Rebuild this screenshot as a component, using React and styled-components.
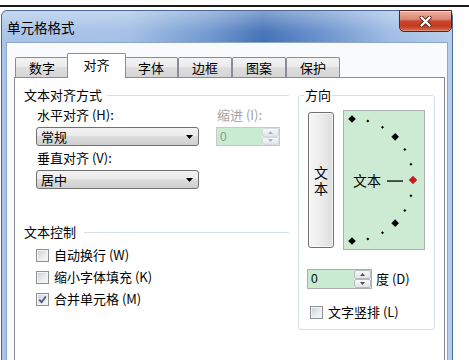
import React from "react";
import styled, { createGlobalStyle } from "styled-components";

const GlobalStyle = createGlobalStyle`
  html, body { margin: 0; padding: 0; background: #ffffff; }
  body {
    font-family: "Noto Sans CJK SC", "Noto Sans", sans-serif;
    font-size: 13px;
    color: #000;
  }
  * { box-sizing: border-box; }
`;

const Page = styled.div`
  width: 469px;
  height: 360px;
  overflow: hidden;
  padding-top: 5px;
  background: #fff;
`;

const TopRule = styled.div`
  height: 2px;
  background: #1a1a1a;
`;

const Window = styled.div`
  margin: 3px 0 0 1px;
  width: 452px;
  height: 400px;
  display: flex;
  flex-direction: column;
  border: 1px solid #4a6a94;
  border-radius: 6px 6px 0 0;
  background:
    linear-gradient(180deg, rgba(255,255,255,0.35) 0px, rgba(255,255,255,0.05) 20px, rgba(255,255,255,0) 31px),
    linear-gradient(90deg, #a9c4e8 0%, #a2bfe6 28%, #6f97cf 46%, #4170b6 58%, #6891cc 71%, #9dbbe4 86%, #b6ceec 100%);
`;

const TitleBar = styled.div`
  height: 31px;
  display: flex;
  justify-content: space-between;
  align-items: flex-start;
  padding-left: 5px;
`;

const Title = styled.div`
  margin-top: 7px;
  line-height: 18px;
  font-size: 13.5px;
  color: #000;
`;

const CloseButton = styled.div`
  width: 53px;
  height: 22px;
  margin-top: -1px;
  display: flex;
  align-items: center;
  justify-content: center;
  border: 1px solid #5b2118;
  border-radius: 0 0 5px 5px;
  background: linear-gradient(180deg, #eab1a2 0%, #dc8a75 40%, #c8452a 52%, #c23b20 75%, #d96b4f 100%);
  box-shadow: inset 0 1px 0 rgba(255,255,255,0.45), inset 0 -1px 1px rgba(255,255,255,0.25);
`;

const Client = styled.div`
  flex: 1;
  margin: 0 4px;
  border: 1px solid #8fa7c6;
  background: #f9fafb;
  padding: 10px 2px 0 7px;
  display: flex;
  flex-direction: column;
`;

const TabRow = styled.div`
  display: flex;
  align-items: flex-end;
  height: 24px;
  padding-left: 1px;
  position: relative;
  z-index: 1;
`;

const Tab = styled.div`
  width: ${(p) => (p.$active ? 59 : 54)}px;
  height: ${(p) => (p.$active ? 25 : 20)}px;
  margin: 0 ${(p) => (p.$active ? -2 : 0)}px ${(p) => (p.$active ? -1 : 0)}px;
  border: 1px solid #898c95;
  border-bottom: none;
  border-radius: 2px 2px 0 0;
  background: ${(p) =>
    p.$active
      ? "#ffffff"
      : "linear-gradient(180deg, #f3f3f3 0%, #ebebeb 45%, #dedede 50%, #d5d5d5 100%)"};
  display: flex;
  align-items: center;
  justify-content: center;
  position: relative;
  z-index: ${(p) => (p.$active ? 2 : 1)};
  font-size: 13px;
  line-height: 16px;
  padding-bottom: ${(p) => (p.$active ? 2 : 0)}px;
`;

const Panel = styled.div`
  flex: 1;
  border: 1px solid #898c95;
  background: #ffffff;
  display: flex;
  align-items: flex-start;
  padding-right: 9px;
`;

const LeftCol = styled.div`
  width: 274px;
  padding: 8px 0 0 9px;
  display: flex;
  flex-direction: column;
`;

const SectionHeader = styled.div`
  display: flex;
  align-items: center;
  height: 18px;
  margin-top: ${(p) => p.$mt || 0}px;
`;

const SectionLabel = styled.span`
  line-height: 18px;
  white-space: nowrap;
`;

const SectionLine = styled.span`
  flex: 1;
  height: 1px;
  margin-left: ${(p) => p.$gap}px;
  background: #d9dfe6;
`;

const FieldGrid = styled.div`
  display: grid;
  grid-template-columns: 163px 64px;
  column-gap: 17px;
  row-gap: 3px;
  margin: 2px 0 0 12px;
`;

const Field = styled.div`
  display: flex;
  flex-direction: column;
  gap: 3px;
`;

const FieldLabel = styled.span`
  line-height: 18px;
  padding-left: 1px;
  white-space: nowrap;
  color: ${(p) => (p.$disabled ? "#a3a3a3" : "#000")};
`;

const Combo = styled.div`
  width: 163px;
  height: 19px;
  border: 1px solid #707070;
  border-radius: 3px;
  background: linear-gradient(180deg, #f2f2f2 0%, #ebebeb 45%, #dddddd 50%, #cfcfcf 100%);
  display: flex;
  align-items: center;
  justify-content: space-between;
  padding: 0 5px 0 4px;
  line-height: 17px;
`;

const SpinBox = styled.div`
  display: flex;
  width: ${(p) => p.$w}px;
  height: ${(p) => p.$h}px;
  border: 1px solid ${(p) => (p.$disabled ? "#c5cad0" : "#abadb3")};
  background: #c9ebd0;
`;

const SpinValue = styled.div`
  flex: 1;
  padding-left: 3px;
  display: flex;
  align-items: center;
  font-family: "Liberation Sans", Arial, sans-serif;
  font-size: 12px;
  color: ${(p) => (p.$disabled ? "#8d978f" : "#000")};
`;

const SpinButtons = styled.div`
  width: 17px;
  display: flex;
  flex-direction: column;
  background: #f3f4f6;
`;

const SpinButton = styled.div`
  flex: 1;
  display: flex;
  align-items: center;
  justify-content: center;
  border: 1px solid ${(p) => (p.$disabled ? "#d7dade" : "#b6bac1")};
  border-radius: 2px;
  background: linear-gradient(180deg, #f7f8fa, #e1e4e9);
`;

const CheckList = styled.div`
  display: flex;
  flex-direction: column;
  margin: 3px 0 0 12px;
`;

const CheckRow = styled.label`
  display: flex;
  align-items: center;
  gap: 5px;
  height: 22px;
  margin: ${(p) => p.$m || "0"};
  line-height: 18px;
  white-space: nowrap;
`;

const CheckBox = styled.span`
  width: 13px;
  height: 13px;
  flex: none;
  border: 1px solid #8e8f8f;
  background: linear-gradient(135deg, #c9cdd3 0%, #e9ebee 55%, #f8f8f8 100%);
  box-shadow: inset 0 0 0 1px #f4f4f4;
  display: flex;
  align-items: center;
  justify-content: center;
`;

const Group = styled.fieldset`
  margin: 8px 0 0 9px;
  width: 137px;
  min-width: 0;
  border: 1px solid #d5dde5;
  border-radius: 3px;
  padding: 6px 8px 6px 9px;
`;

const Legend = styled.legend`
  margin-left: -4px;
  padding: 0 1px;
  line-height: 18px;
  font-size: 13px;
`;

const GroupBody = styled.div`
  display: flex;
  flex-direction: column;
`;

const DialRow = styled.div`
  display: flex;
  align-items: center;
  gap: 9px;
`;

const VerticalButton = styled.div`
  width: 26px;
  height: 136px;
  border: 1px solid #707070;
  border-radius: 3px;
  background: linear-gradient(90deg, #f6f6f6 0%, #ececec 50%, #dedede 100%);
  box-shadow: inset 0 0 0 1px rgba(255,255,255,0.7);
  display: flex;
  align-items: center;
  justify-content: center;
`;

const VerticalText = styled.span`
  width: 14px;
  font-size: 14px;
  line-height: 16px;
  text-align: center;
  word-break: break-all;
`;

const DialBox = styled.div`
  width: 82px;
  height: 140px;
  border: 1px solid #a9b1aa;
  background: #cdebd2;
  display: flex;
`;

const AngleRow = styled.div`
  display: flex;
  align-items: center;
  gap: 4px;
  margin: 19px 0 0 -1px;
  line-height: 18px;
`;

function Arrow({ up, color }) {
  return (
    <svg width="5" height="3" viewBox="0 0 5 3">
      <polygon points={up ? "0,3 5,3 2.5,0" : "0,0 5,0 2.5,3"} fill={color} />
    </svg>
  );
}

function Spin({ w, h, value, disabled }) {
  const c = disabled ? "#b0b4b8" : "#505050";
  return (
    <SpinBox $w={w} $h={h} $disabled={disabled}>
      <SpinValue $disabled={disabled}>{value}</SpinValue>
      <SpinButtons>
        <SpinButton $disabled={disabled}><Arrow up color={c} /></SpinButton>
        <SpinButton $disabled={disabled}><Arrow color={c} /></SpinButton>
      </SpinButtons>
    </SpinBox>
  );
}

function DropArrow() {
  return (
    <svg width="7" height="4" viewBox="0 0 7 4">
      <polygon points="0,0 7,0 3.5,4" fill="#000" />
    </svg>
  );
}

function Check({ checked }) {
  return (
    <CheckBox>
      {checked && (
        <svg width="9" height="9" viewBox="0 0 9 9">
          <path d="M1.2 4.6 L3.6 7.2 L7.8 1.4" fill="none" stroke="#3f5487" strokeWidth="1.7" />
        </svg>
      )}
    </CheckBox>
  );
}

function Dial() {
  const cx = 8, cy = 69, R = 61;
  const marks = [];
  for (let a = 90; a >= -90; a -= 15) {
    const rad = (a * Math.PI) / 180;
    const x = cx + R * Math.cos(rad);
    const y = cy - R * Math.sin(rad);
    const big = a % 45 === 0;
    const red = a === 0;
    const s = big ? 3.8 : 1.5;
    marks.push(
      <polygon
        key={a}
        points={`${x},${y - s} ${x + s},${y} ${x},${y + s} ${x - s},${y}`}
        fill={red ? "#d8161c" : "#000"}
        stroke={red ? "#8a0d10" : "none"}
        strokeWidth={red ? 0.6 : 0}
      />
    );
  }
  return (
    <svg width="80" height="138" viewBox="0 0 80 138">
      {marks}
      <text x="9" y="75" fontSize="14" fontFamily='"Noto Sans CJK SC", sans-serif' fill="#000">
        文本
      </text>
      <rect x="43" y="69.4" width="16" height="1.3" fill="#000" />
    </svg>
  );
}

const tabs = ["数字", "对齐", "字体", "边框", "图案", "保护"];

export default function App() {
  return (
    <>
      <GlobalStyle />
      <Page>
        <TopRule />
        <Window>
          <TitleBar>
            <Title>单元格格式</Title>
            <CloseButton>
              <svg width="13" height="11" viewBox="0 0 13 11">
                <path d="M2.5 1.5 L10.5 9.5 M10.5 1.5 L2.5 9.5" stroke="#5a2016" strokeWidth="4" strokeLinecap="round" />
                <path d="M2.5 1.5 L10.5 9.5 M10.5 1.5 L2.5 9.5" stroke="#ffffff" strokeWidth="2.4" strokeLinecap="round" />
              </svg>
            </CloseButton>
          </TitleBar>
          <Client>
            <TabRow>
              {tabs.map((t) => (
                <Tab key={t} $active={t === "对齐"}>{t}</Tab>
              ))}
            </TabRow>
            <Panel>
              <LeftCol>
                <SectionHeader>
                  <SectionLabel>文本对齐方式</SectionLabel>
                  <SectionLine $gap={5} />
                </SectionHeader>
                <FieldGrid>
                  <Field>
                    <FieldLabel>水平对齐 (H):</FieldLabel>
                    <Combo>常规<DropArrow /></Combo>
                  </Field>
                  <Field>
                    <FieldLabel $disabled>缩进 (I):</FieldLabel>
                    <Spin w={64} h={19} value="0" disabled />
                  </Field>
                  <Field>
                    <FieldLabel>垂直对齐 (V):</FieldLabel>
                    <Combo>居中<DropArrow /></Combo>
                  </Field>
                </FieldGrid>
                <SectionHeader $mt={34}>
                  <SectionLabel>文本控制</SectionLabel>
                  <SectionLine $gap={8} />
                </SectionHeader>
                <CheckList>
                  <CheckRow><Check />自动换行 (W)</CheckRow>
                  <CheckRow><Check />缩小字体填充 (K)</CheckRow>
                  <CheckRow><Check checked />合并单元格 (M)</CheckRow>
                </CheckList>
              </LeftCol>
              <Group>
                <Legend>方向</Legend>
                <GroupBody>
                  <DialRow>
                    <VerticalButton><VerticalText>文本</VerticalText></VerticalButton>
                    <DialBox><Dial /></DialBox>
                  </DialRow>
                  <AngleRow>
                    <Spin w={65} h={20} value="0" />
                    <span>度 (D)</span>
                  </AngleRow>
                  <CheckRow $m="12px 0 0 2px"><Check />文字竖排 (L)</CheckRow>
                </GroupBody>
              </Group>
            </Panel>
          </Client>
        </Window>
      </Page>
    </>
  );
}
